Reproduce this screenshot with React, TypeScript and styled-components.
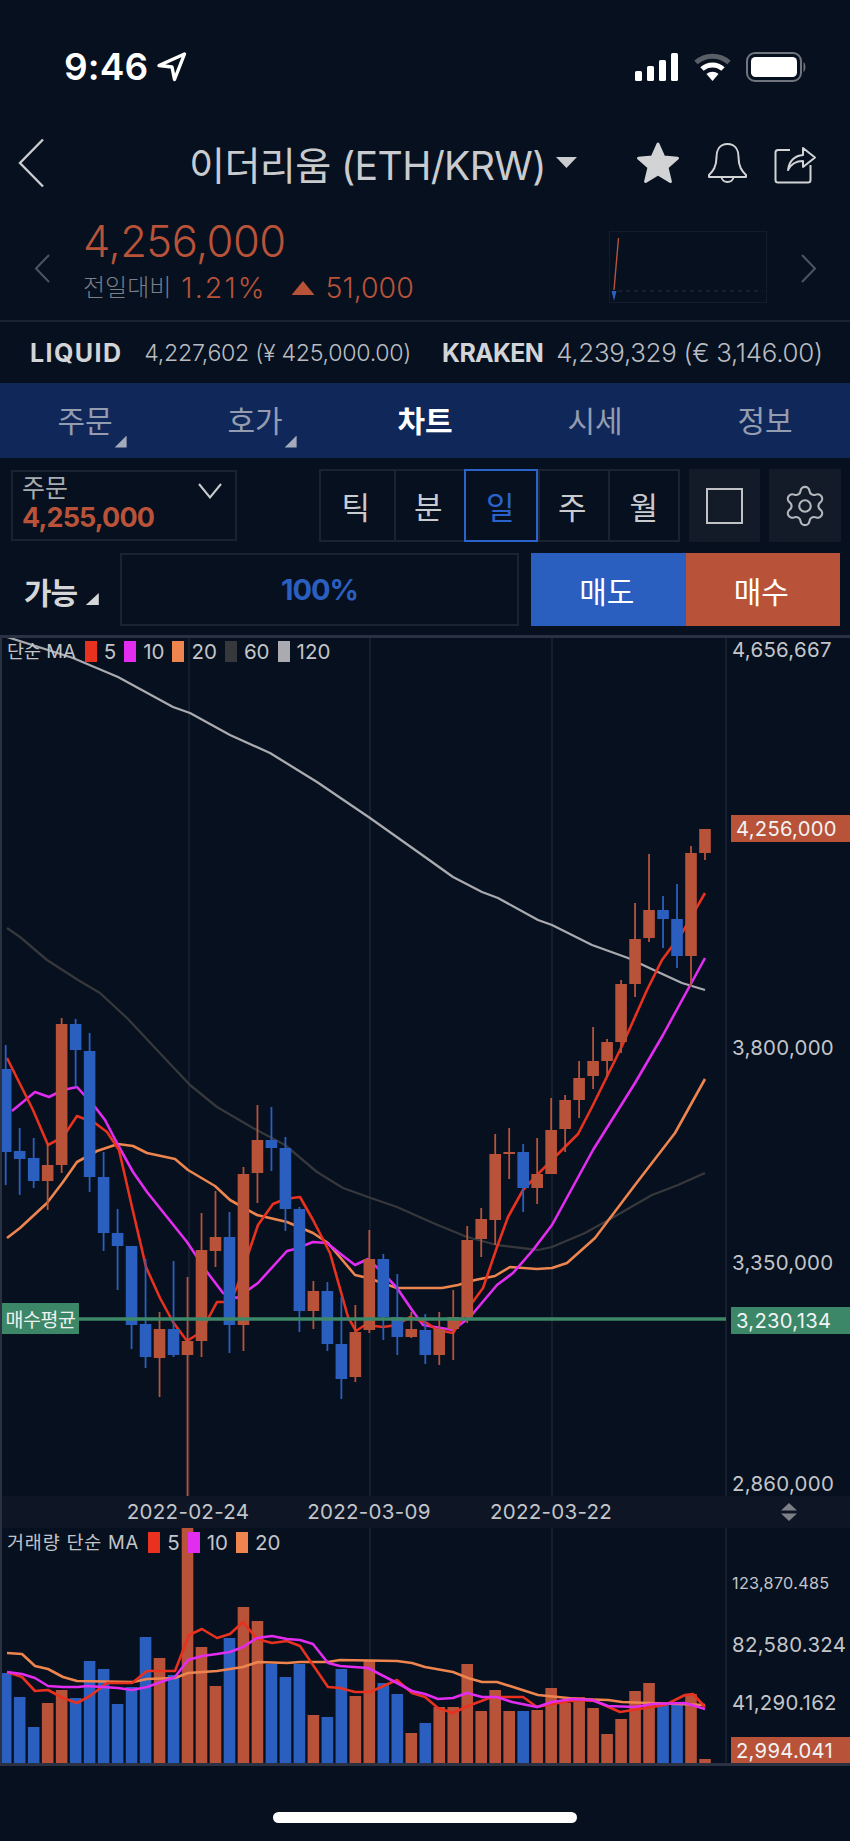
import React from 'react'
import styled, { createGlobalStyle } from 'styled-components'
import { Settings } from 'lucide-react'

const BLUE = '#2b5fbf'
const RED = '#b8533a'
const GREEN = '#3c8768'
const LINE = '#1a2231'
const EDGE = '#2a3142'

const GlobalStyle = createGlobalStyle`
  html, body {
    margin: 0;
    padding: 0;
    background: #06101e;
  }
  * {
    box-sizing: border-box;
  }
`

const Page = styled.div`
  width: 850px;
  height: 1841px;
  display: flex;
  flex-direction: column;
  overflow: hidden;
  background: #06101e;
  color: #c9cbce;
  font-family: Inter, 'Noto Sans CJK KR', sans-serif;
`

const StatusBar = styled.div`
  height: 130px;
  padding: 52px 43px 0 64px;
  display: flex;
  justify-content: space-between;
  align-items: flex-start;
`

const TimeGroup = styled.div`
  display: flex;
  align-items: center;
  gap: 8px;
`

const Time = styled.span`
  font-size: 37px;
  line-height: 30px;
  font-weight: 600;
  color: #fff;
  letter-spacing: 0.1px;
`

const StatusIcons = styled.div`
  display: flex;
  align-items: center;
  gap: 15px;
`

const TopBar = styled.div`
  height: 66px;
  padding: 0 33px 0 18px;
  display: flex;
  align-items: center;
`

const TitleGroup = styled.div`
  margin: -1px 0 0 144px;
  display: flex;
  align-items: center;
  gap: 10px;
  flex: 1;
`

const Title = styled.span`
  font-size: 39.2px;
  font-weight: 400;
  letter-spacing: -0.65px;
  color: #c9cbce;
  white-space: nowrap;
`

const TitleCaret = styled.span`
  width: 21px;
  height: 11px;
  background: #c9cbce;
  clip-path: polygon(0 0, 100% 0, 50% 100%);
`

const TopActions = styled.div`
  display: flex;
  align-items: center;
  gap: 26px;
`

const PriceRow = styled.div`
  height: 124px;
  padding: 23px 33px 0 34px;
  display: flex;
  align-items: flex-start;
`

const SideChevron = styled.div`
  width: 16px;
  margin-top: 35px;
`

const PriceInfo = styled.div`
  margin-left: 33px;
  flex: 1;
`

const BigPrice = styled.div`
  font-size: 43.5px;
  line-height: 44px;
  font-weight: 300;
  color: ${RED};
  letter-spacing: -0.5px;
`

const ChangeRow = styled.div`
  margin-top: 10px;
  display: flex;
  align-items: center;
  font-size: 28.5px;
  line-height: 30px;
  font-weight: 300;
  color: ${RED};
`

const ChangeLabel = styled.span`
  font-size: 24px;
  font-weight: 300;
  color: #7a7f8a;
  margin-right: 10px;
`

const ChangePercent = styled.span`
  letter-spacing: 2.1px;
`

const UpTriangle = styled.span`
  width: 23px;
  height: 14px;
  margin: 0 11px 0 25px;
  background: ${RED};
  clip-path: polygon(50% 0, 100% 100%, 0 100%);
`

const MiniChart = styled.div`
  width: 158px;
  height: 72px;
  margin: 12px 34px 0 0;
  border: 1px solid #141c2b;
`

const ExchangeRow = styled.div`
  height: 63px;
  border-top: 2px solid #1b2332;
  padding: 0 0 0 30px;
  display: flex;
  align-items: center;
  font-weight: 300;
  color: #b9bcc1;
  white-space: nowrap;
`

const ExchangeName = styled.b<{ $gap: number; $spacing: number }>`
  font-size: 25px;
  font-weight: 700;
  color: #d2d4d7;
  letter-spacing: ${(p) => p.$spacing}px;
  margin-right: ${(p) => p.$gap}px;
`

const ExchangeValue = styled.span<{ $gap: number; $size: number }>`
  font-size: ${(p) => p.$size}px;
  margin-right: ${(p) => p.$gap}px;
  letter-spacing: -0.3px;
`

const Tabs = styled.div`
  height: 75px;
  background: #10275a;
  display: grid;
  grid-template-columns: repeat(5, 170px);
  align-items: center;
  justify-items: center;
`

const Tab = styled.div<{ $active?: boolean }>`
  position: relative;
  font-size: 30px;
  line-height: 40px;
  font-weight: ${(p) => (p.$active ? 700 : 400)};
  color: ${(p) => (p.$active ? '#fff' : '#949db0')};
`

const TabCorner = styled.span`
  position: absolute;
  right: -14px;
  bottom: -7px;
  width: 12px;
  height: 12px;
  background: #a4abbb;
  clip-path: polygon(100% 0, 100% 100%, 0 100%);
`

const ControlRow = styled.div`
  height: 73px;
  margin: 11px 9px 0 11px;
  display: flex;
  align-items: stretch;
`

const OrderBox = styled.div`
  position: relative;
  width: 227px;
  margin: 1px 0;
  padding: 2px 0 0 9px;
  border: 2px solid #1c2330;
`

const OrderLabel = styled.div`
  font-size: 25px;
  line-height: 28px;
  color: #a8abb0;
`

const OrderPrice = styled.div`
  font-size: 27px;
  line-height: 31px;
  font-weight: 700;
  color: ${RED};
  letter-spacing: -0.9px;
`

const OrderChevron = styled.svg`
  position: absolute;
  top: 11px;
  right: 13px;
`

const Segment = styled.div`
  width: 361px;
  margin-left: 82px;
  display: grid;
  grid-template-columns: 73px 70px 74px 70px 73px;
  border: 2px solid #1c2330;
`

const SegmentCell = styled.div<{ $active?: boolean }>`
  display: flex;
  align-items: center;
  justify-content: center;
  padding-right: 3px;
  font-size: 31px;
  color: ${(p) => (p.$active ? '#2a63cc' : '#c9cbce')};
  border-left: 2px solid #1c2330;
  margin: ${(p) => (p.$active ? '-2px 0' : '0')};
  outline: ${(p) => (p.$active ? '2px solid #2a63cc' : 'none')};
  outline-offset: -2px;
  &:first-child {
    border-left: 0;
  }
`

const IconButton = styled.div`
  width: 72px;
  margin-left: 9px;
  background: #141b28;
  display: flex;
  align-items: center;
  justify-content: center;
  color: #b5b8bd;
`

const SquareGlyph = styled.span`
  width: 37px;
  height: 36px;
  border: 2px solid #c0c2c6;
`

const OrderRow = styled.div`
  height: 73px;
  margin: 11px 10px 0 24px;
  display: flex;
  align-items: stretch;
`

const AvailableLabel = styled.div`
  width: 96px;
  padding-top: 3px;
  display: flex;
  align-items: center;
  font-size: 30px;
  font-weight: 700;
  color: #d5d6d8;
  letter-spacing: -1.2px;
`

const AvailableCorner = styled.span`
  width: 13px;
  height: 12px;
  margin: 16px 0 0 9px;
  background: #d5d6d8;
  clip-path: polygon(100% 0, 100% 100%, 0 100%);
`

const PercentBox = styled.div`
  width: 399px;
  display: flex;
  align-items: center;
  justify-content: center;
  border: 2px solid #1c2330;
  font-size: 29px;
  font-weight: 700;
  letter-spacing: -1px;
  color: ${BLUE};
`

const TradeButton = styled.div<{ $color: string }>`
  flex: 1;
  display: flex;
  align-items: center;
  justify-content: center;
  padding-right: 3px;
  background: ${(p) => p.$color};
  color: #fff;
  font-size: 30px;
`

const SellGap = styled.div`
  width: 12px;
`

const ChartArea = styled.div`
  margin-top: 9px;
  border-top: 3px solid ${EDGE};
  border-left: 2px solid ${EDGE};
  border-bottom: 3px solid ${EDGE};
  display: flex;
  flex-direction: column;
`

const PricePane = styled.div`
  position: relative;
  height: 858px;
`

const VolumePane = styled.div`
  position: relative;
  height: 235px;
`

const PaneSvg = styled.svg`
  display: block;
`

const DateBar = styled.div`
  position: relative;
  height: 32px;
  background: #0e1626;
`

const DateLabel = styled.span<{ $x: number }>`
  position: absolute;
  left: ${(p) => p.$x - 3}px;
  top: 0;
  line-height: 32px;
  transform: translateX(-50%);
  font-size: 20.5px;
  color: #c3c5c9;
  letter-spacing: 0.3px;
`

const ScaleIcon = styled.svg`
  position: absolute;
  left: 778px;
  top: 7px;
`

const Legend = styled.div<{ $top: number }>`
  position: absolute;
  left: 5px;
  top: ${(p) => p.$top}px;
  display: flex;
  align-items: center;
  font-size: 18.5px;
  line-height: 21px;
  color: #c3c5c9;
  white-space: nowrap;
`

const LegendTitle = styled.span<{ $spacing?: number }>`
  margin-right: 9px;
  letter-spacing: ${(p) => p.$spacing ?? 0}px;
`

const Swatch = styled.span<{ $color: string }>`
  width: 12px;
  height: 21px;
  background: ${(p) => p.$color};
  margin-right: 7px;
`

const LegendValue = styled.span`
  font-size: 20.5px;
  margin-right: 8px;
`

const AxisLabel = styled.span<{ $y: number; $small?: boolean }>`
  position: absolute;
  left: 730px;
  top: ${(p) => p.$y}px;
  line-height: 24px;
  transform: translateY(-50%);
  font-size: ${(p) => (p.$small ? 16.2 : 20.4)}px;
  letter-spacing: 0.3px;
  color: #c3c5c9;
`

const AxisTag = styled.span<{ $top: number; $height: number; $color: string }>`
  position: absolute;
  left: 729px;
  width: 119px;
  top: ${(p) => p.$top}px;
  height: ${(p) => p.$height}px;
  padding-left: 5px;
  display: flex;
  align-items: center;
  background: ${(p) => p.$color};
  color: #f2f3f4;
  font-size: 20.2px;
  letter-spacing: 0.3px;
`

const AvgTag = styled.span`
  position: absolute;
  left: 0;
  top: 665px;
  width: 77px;
  height: 31px;
  display: flex;
  align-items: center;
  justify-content: center;
  background: ${GREEN};
  color: #eef1ef;
  font-size: 19.5px;
  letter-spacing: -0.5px;
`

const HomeArea = styled.div`
  flex: 1;
  display: flex;
  justify-content: center;
  padding-top: 46px;
`

const HomeIndicator = styled.div`
  width: 304px;
  height: 11px;
  border-radius: 6px;
  background: #fff;
`

// [up, wickTop, bodyTop, bodyBottom, wickBottom], y in page pixels
type Candle = [boolean, number, number, number, number]

const candles: Candle[] = [
  [false, 1045, 1069, 1152, 1185],
  [false, 1128, 1151, 1159, 1195],
  [false, 1138, 1158, 1181, 1188],
  [true, 1143, 1165, 1181, 1210],
  [true, 1018, 1024, 1165, 1173],
  [false, 1019, 1024, 1050, 1087],
  [false, 1033, 1051, 1177, 1192],
  [false, 1152, 1177, 1233, 1251],
  [false, 1209, 1233, 1246, 1290],
  [false, 1246, 1246, 1325, 1349],
  [false, 1259, 1324, 1357, 1368],
  [true, 1312, 1329, 1358, 1397],
  [false, 1261, 1329, 1355, 1357],
  [true, 1277, 1341, 1355, 1496],
  [true, 1213, 1250, 1341, 1357],
  [true, 1191, 1237, 1251, 1267],
  [false, 1212, 1237, 1325, 1353],
  [true, 1167, 1174, 1325, 1351],
  [true, 1105, 1140, 1173, 1203],
  [false, 1107, 1140, 1148, 1171],
  [false, 1137, 1148, 1209, 1231],
  [false, 1207, 1209, 1311, 1332],
  [true, 1281, 1291, 1311, 1329],
  [false, 1282, 1291, 1344, 1351],
  [false, 1297, 1344, 1379, 1399],
  [true, 1305, 1332, 1377, 1382],
  [true, 1230, 1259, 1330, 1333],
  [false, 1254, 1259, 1317, 1340],
  [false, 1274, 1317, 1337, 1355],
  [true, 1312, 1329, 1337, 1338],
  [false, 1314, 1330, 1355, 1364],
  [true, 1312, 1329, 1355, 1365],
  [true, 1290, 1317, 1329, 1360],
  [true, 1226, 1240, 1317, 1323],
  [true, 1208, 1219, 1239, 1257],
  [true, 1134, 1154, 1220, 1245],
  [true, 1128, 1152, 1154, 1179],
  [false, 1144, 1152, 1188, 1212],
  [true, 1138, 1174, 1188, 1204],
  [true, 1098, 1130, 1174, 1174],
  [true, 1095, 1100, 1129, 1152],
  [true, 1061, 1078, 1100, 1118],
  [true, 1027, 1061, 1076, 1089],
  [true, 1039, 1042, 1061, 1077],
  [true, 980, 984, 1042, 1053],
  [true, 903, 939, 984, 997],
  [true, 854, 910, 938, 942],
  [false, 896, 910, 919, 948],
  [false, 884, 919, 956, 968],
  [true, 846, 853, 956, 987],
  [true, 829, 829, 853, 860],
]

const ma5 = '7,1058 33,1110 48,1145 63,1137 77,1116 95,1123 107,1132 119,1150 132,1207 146,1267 160,1298 173,1322 187,1341 201,1332 217,1302 230,1302 237,1287 258,1225 273,1204 285,1199 300,1197 313,1220 330,1253 348,1317 356,1331 365,1325 383,1327 397,1325 410,1317 427,1323 437,1330 453,1333 472,1303 483,1288 497,1247 508,1217 523,1190 540,1172 557,1155 578,1134 592,1107 622,1046 647,990 662,960 682,933 705,893'
const ma10 = '12,1111 35,1092 49,1097 63,1090 77,1087 95,1107 105,1120 118,1145 133,1172 147,1192 167,1217 187,1242 207,1272 223,1293 237,1298 258,1283 287,1251 295,1249 313,1242 327,1243 342,1255 355,1265 368,1259 383,1273 397,1288 412,1310 423,1325 453,1330 470,1317 497,1285 513,1273 533,1250 552,1225 593,1150 635,1083 663,1035 675,1013 705,958'
const ma20 = '7,1238 20,1228 47,1203 63,1182 77,1162 97,1151 118,1144 133,1146 147,1153 175,1159 188,1170 215,1186 230,1200 257,1215 287,1222 313,1233 328,1243 355,1275 368,1278 397,1288 442,1288 458,1285 475,1280 495,1276 510,1267 537,1269 552,1268 567,1263 595,1238 635,1185 675,1133 705,1079'
const ma60 = '7,928 20,937 47,960 78,980 100,993 127,1018 157,1050 190,1085 217,1107 253,1128 285,1145 317,1172 343,1188 368,1197 397,1207 433,1223 467,1237 497,1245 538,1250 552,1247 585,1233 612,1218 652,1195 678,1185 705,1173'
const ma120 = '7,637 73,658 118,677 173,707 190,713 230,735 270,753 317,782 370,818 425,857 453,877 482,892 498,898 538,920 552,925 592,945 628,958 658,972 682,983 705,990'

const volumes: [boolean, number][] = [
  [false, 1673], [false, 1697], [false, 1727], [true, 1703], [true, 1690], [false, 1698], [false, 1661],
  [false, 1669], [false, 1704], [false, 1687], [false, 1637], [true, 1658], [false, 1675], [true, 1528],
  [true, 1647], [true, 1686], [false, 1638], [true, 1607], [true, 1621], [false, 1664], [false, 1677],
  [false, 1664], [true, 1715], [false, 1717], [false, 1669], [true, 1696], [true, 1661], [false, 1683],
  [false, 1694], [true, 1733], [false, 1723], [true, 1707], [true, 1707], [true, 1664], [true, 1711],
  [true, 1690], [true, 1711], [false, 1711], [true, 1710], [true, 1688], [true, 1703], [true, 1697],
  [true, 1708], [true, 1734], [true, 1719], [true, 1691], [true, 1683], [false, 1705], [false, 1703],
  [true, 1694], [true, 1759],
]

const vol5 = '7,1672 22,1677 35,1691 48,1690 63,1698 77,1703 90,1696 107,1683 132,1683 147,1671 175,1671 189,1635 202,1629 217,1638 230,1634 243,1622 257,1639 272,1643 287,1641 300,1646 328,1687 340,1688 355,1692 370,1692 397,1680 412,1693 425,1697 438,1708 453,1713 468,1706 492,1697 523,1697 537,1707 558,1703 578,1700 595,1701 620,1712 652,1707 665,1705 685,1695 693,1694 705,1707'
const vol10 = '7,1672 22,1674 35,1678 48,1686 63,1687 78,1687 87,1686 118,1688 132,1690 147,1687 175,1677 188,1660 202,1656 217,1654 230,1652 243,1647 257,1638 272,1636 287,1639 300,1640 313,1644 328,1663 340,1666 368,1668 397,1683 412,1691 425,1694 438,1699 453,1698 467,1693 482,1697 497,1697 512,1702 537,1707 552,1702 572,1699 592,1700 608,1706 635,1707 652,1704 685,1703 705,1709'
const vol20 = '7,1653 22,1654 35,1666 48,1669 63,1677 77,1681 133,1682 147,1679 175,1678 188,1673 217,1671 243,1667 258,1662 287,1663 300,1662 328,1662 340,1660 397,1661 412,1663 425,1667 453,1672 468,1678 482,1682 497,1682 538,1695 578,1699 608,1700 622,1702 705,1705'

const candleX = (i: number) => 5.7 + i * 13.986

const MaLine = ({ points, color, width = 2.6 }: { points: string; color: string; width?: number }) => (
  <polyline points={points} fill="none" stroke={color} strokeWidth={width} strokeLinejoin="round" />
)

const GridLines = ({ from, to }: { from: number; to: number }) => (
  <>
    {[189, 370, 552, 726].map((x) => (
      <line key={x} x1={x} x2={x} y1={from} y2={to} stroke={LINE} strokeWidth={1.6} />
    ))}
  </>
)

const App: React.FC = () => {
  return (
    <Page>
      <GlobalStyle />
      <StatusBar>
        <TimeGroup>
          <Time>9:46</Time>
          <svg width="31" height="30" viewBox="0 0 31 30">
            <path d="M28.5 2 L3 13.5 L16 15 L18.5 27.5 Z" fill="none" stroke="#fff" strokeWidth="3.4" strokeLinejoin="round" />
          </svg>
        </TimeGroup>
        <StatusIcons>
          <svg width="44" height="28" viewBox="0 0 44 28">
            <rect x="0" y="18" width="7" height="10" rx="1.6" fill="#fff" />
            <rect x="12" y="13" width="7" height="15" rx="1.6" fill="#fff" />
            <rect x="24" y="7" width="7" height="21" rx="1.6" fill="#fff" />
            <rect x="36" y="0" width="7" height="28" rx="1.6" fill="#fff" />
          </svg>
          <svg width="37" height="29" viewBox="0 0 37 29">
            <path d="M2 9.5 C11 1 26 1 35 9.5" fill="none" stroke="#5a5e66" strokeWidth="5" />
            <path d="M8 16 C14 10.5 23 10.5 29 16" fill="none" stroke="#fff" strokeWidth="5" />
            <path d="M12.5 21 L18.5 28 L24.5 21 C21 18 16 18 12.5 21 Z" fill="#fff" />
          </svg>
          <svg width="61" height="30" viewBox="0 0 61 30">
            <rect x="1" y="1" width="54" height="28" rx="8" fill="none" stroke="#70757e" strokeWidth="2" />
            <rect x="5" y="5" width="46" height="20" rx="4.5" fill="#fff" />
            <path d="M57.5 10 C60 11 60 19 57.5 20 Z" fill="#70757e" />
          </svg>
        </StatusIcons>
      </StatusBar>

      <TopBar>
        <svg width="27" height="50" viewBox="0 0 27 50">
          <polyline points="25,1.5 2,25 25,48.5" fill="none" stroke="#c9cbce" strokeWidth="2.4" />
        </svg>
        <TitleGroup>
          <Title>이더리움 (ETH/KRW)</Title>
          <TitleCaret />
        </TitleGroup>
        <TopActions>
          <svg width="46" height="44" viewBox="0 0 46 44">
            <path d="M23 3 L28.8 16 L42.5 17.2 L32 26.3 L35.4 40.5 L23 33 L10.6 40.5 L14 26.3 L3.5 17.2 L17.2 16 Z" fill="#d2d3d5" stroke="#d2d3d5" strokeWidth="3" strokeLinejoin="round" />
          </svg>
          <svg width="41" height="42" viewBox="0 0 41 42">
            <path d="M20.5 2 C12 2 9.5 9 9.5 15 C9.5 25 6 29 2 33 L2 35 L39 35 L39 33 C35 29 31.5 25 31.5 15 C31.5 9 29 2 20.5 2 Z M14.5 35 C15 41.5 26 41.5 26.5 35" fill="none" stroke="#d2d3d5" strokeWidth="2" strokeLinejoin="round" />
          </svg>
          <svg width="43" height="42" viewBox="0 0 43 42">
            <path d="M16 8 L4 8 C2.5 8 1.5 9 1.5 10.5 L1.5 38 C1.5 39.5 2.5 40.5 4 40.5 L34 40.5 C35.5 40.5 36.5 39.5 36.5 38 L36.5 23" fill="none" stroke="#d2d3d5" strokeWidth="2" />
            <path d="M14 28 C15 19 21 13.5 29 13 L29 6 L41 15.5 L29 25 L29 19 C23 19 17 22 14 28 Z" fill="none" stroke="#d2d3d5" strokeWidth="2" strokeLinejoin="round" />
          </svg>
        </TopActions>
      </TopBar>

      <PriceRow>
        <SideChevron>
          <svg width="16" height="29" viewBox="0 0 16 29">
            <polyline points="15,1 2,14.5 15,28" fill="none" stroke="#4d5462" strokeWidth="2" />
          </svg>
        </SideChevron>
        <PriceInfo>
          <BigPrice>4,256,000</BigPrice>
          <ChangeRow>
            <ChangeLabel>전일대비</ChangeLabel>
            <ChangePercent>1.21%</ChangePercent>
            <UpTriangle />
            51,000
          </ChangeRow>
        </PriceInfo>
        <MiniChart>
          <svg width="156" height="70" viewBox="0 0 156 70">
            <line x1="8" y1="59" x2="153" y2="59" stroke="#2a3142" strokeWidth="1" strokeDasharray="4 4" />
            <line x1="8.5" y1="6" x2="4" y2="58" stroke={RED} strokeWidth="1.4" />
            <path d="M1.5 59 L6.5 59 L4 69 Z" fill={BLUE} />
          </svg>
        </MiniChart>
        <SideChevron>
          <svg width="16" height="29" viewBox="0 0 16 29">
            <polyline points="1,1 14,14.5 1,28" fill="none" stroke="#4d5462" strokeWidth="2" />
          </svg>
        </SideChevron>
      </PriceRow>

      <ExchangeRow>
        <ExchangeName $gap={22} $spacing={1.4}>LIQUID</ExchangeName>
        <ExchangeValue $gap={31} $size={23.2}>4,227,602 (¥ 425,000.00)</ExchangeValue>
        <ExchangeName $gap={13} $spacing={-0.7}>KRAKEN</ExchangeName>
        <ExchangeValue $gap={0} $size={25.9}>4,239,329 (€ 3,146.00)</ExchangeValue>
      </ExchangeRow>

      <Tabs>
        <Tab>주문<TabCorner /></Tab>
        <Tab>호가<TabCorner /></Tab>
        <Tab $active>차트</Tab>
        <Tab>시세</Tab>
        <Tab>정보</Tab>
      </Tabs>

      <ControlRow>
        <OrderBox>
          <OrderLabel>주문</OrderLabel>
          <OrderPrice>4,255,000</OrderPrice>
          <OrderChevron width="24" height="16" viewBox="0 0 24 16">
            <polyline points="1,1 12,14.5 23,1" fill="none" stroke="#c9cbce" strokeWidth="2" />
          </OrderChevron>
        </OrderBox>
        <Segment>
          <SegmentCell>틱</SegmentCell>
          <SegmentCell>분</SegmentCell>
          <SegmentCell $active>일</SegmentCell>
          <SegmentCell>주</SegmentCell>
          <SegmentCell>월</SegmentCell>
        </Segment>
        <IconButton>
          <SquareGlyph />
        </IconButton>
        <IconButton>
          <Settings size={46} strokeWidth={1.1} />
        </IconButton>
      </ControlRow>

      <OrderRow>
        <AvailableLabel>
          가능
          <AvailableCorner />
        </AvailableLabel>
        <PercentBox>100%</PercentBox>
        <SellGap />
        <TradeButton $color={BLUE}>매도</TradeButton>
        <TradeButton $color={RED}>매수</TradeButton>
      </OrderRow>

      <ChartArea>
        <PricePane>
          <PaneSvg width="848" height="858" viewBox="2 638 848 858">
            <GridLines from={638} to={1496} />
            <MaLine points={ma120} color="#a9abb0" width={2.3} />
            <MaLine points={ma60} color="#36383c" width={2.3} />
            <MaLine points={ma20} color="#ee854f" />
            <MaLine points={ma10} color="#e22df0" />
            <MaLine points={ma5} color="#e8311f" />
            {candles.map(([up, wickTop, bodyTop, bodyBottom, wickBottom], i) => {
              const x = candleX(i)
              const color = up ? RED : BLUE
              return (
                <g key={i}>
                  <line x1={x} x2={x} y1={wickTop} y2={wickBottom} stroke={color} strokeWidth={1.8} />
                  <rect x={x - 5.8} y={bodyTop} width={11.6} height={Math.max(bodyBottom - bodyTop, 1.5)} fill={color} />
                </g>
              )
            })}
            <line x1={79} x2={726} y1={1319} y2={1319} stroke={GREEN} strokeWidth={3.4} />
          </PaneSvg>
          <Legend $top={3}>
            <LegendTitle>단순 MA</LegendTitle>
            <Swatch $color="#e8311f" /><LegendValue>5</LegendValue>
            <Swatch $color="#e22df0" /><LegendValue>10</LegendValue>
            <Swatch $color="#ee854f" /><LegendValue>20</LegendValue>
            <Swatch $color="#36383c" /><LegendValue>60</LegendValue>
            <Swatch $color="#a9abb0" /><LegendValue>120</LegendValue>
          </Legend>
          <AvgTag>매수평균</AvgTag>
          <AxisLabel $y={12}>4,656,667</AxisLabel>
          <AxisTag $top={177} $height={27} $color={RED}>4,256,000</AxisTag>
          <AxisLabel $y={410}>3,800,000</AxisLabel>
          <AxisLabel $y={625}>3,350,000</AxisLabel>
          <AxisTag $top={669} $height={27} $color={GREEN}>3,230,134</AxisTag>
          <AxisLabel $y={846}>2,860,000</AxisLabel>
        </PricePane>
        <DateBar>
          <DateLabel $x={189}>2022-02-24</DateLabel>
          <DateLabel $x={370}>2022-03-09</DateLabel>
          <DateLabel $x={552}>2022-03-22</DateLabel>
          <ScaleIcon width="18" height="18" viewBox="0 0 18 18">
            <path d="M9 0 L17 7.5 L1 7.5 Z M1 10.5 L17 10.5 L9 18 Z" fill="#7d8087" />
          </ScaleIcon>
        </DateBar>
        <VolumePane>
          <PaneSvg width="848" height="235" viewBox="2 1528 848 235">
            <GridLines from={1528} to={1763} />
            {volumes.map(([up, top], i) => (
              <rect key={i} x={candleX(i) - 5.8} y={top} width={11.6} height={1763 - top} fill={up ? RED : BLUE} />
            ))}
            <MaLine points={vol20} color="#ee854f" />
            <MaLine points={vol5} color="#e8311f" />
            <MaLine points={vol10} color="#e22df0" />
          </PaneSvg>
          <Legend $top={4}>
            <LegendTitle $spacing={0.8}>거래량 단순 MA</LegendTitle>
            <Swatch $color="#e8311f" /><LegendValue>5</LegendValue>
            <Swatch $color="#e22df0" /><LegendValue>10</LegendValue>
            <Swatch $color="#ee854f" /><LegendValue>20</LegendValue>
          </Legend>
          <AxisLabel $y={55} $small>123,870.485</AxisLabel>
          <AxisLabel $y={117}>82,580.324</AxisLabel>
          <AxisLabel $y={175}>41,290.162</AxisLabel>
          <AxisTag $top={209} $height={26} $color={RED}>2,994.041</AxisTag>
        </VolumePane>
      </ChartArea>

      <HomeArea>
        <HomeIndicator />
      </HomeArea>
    </Page>
  )
}

export default App
